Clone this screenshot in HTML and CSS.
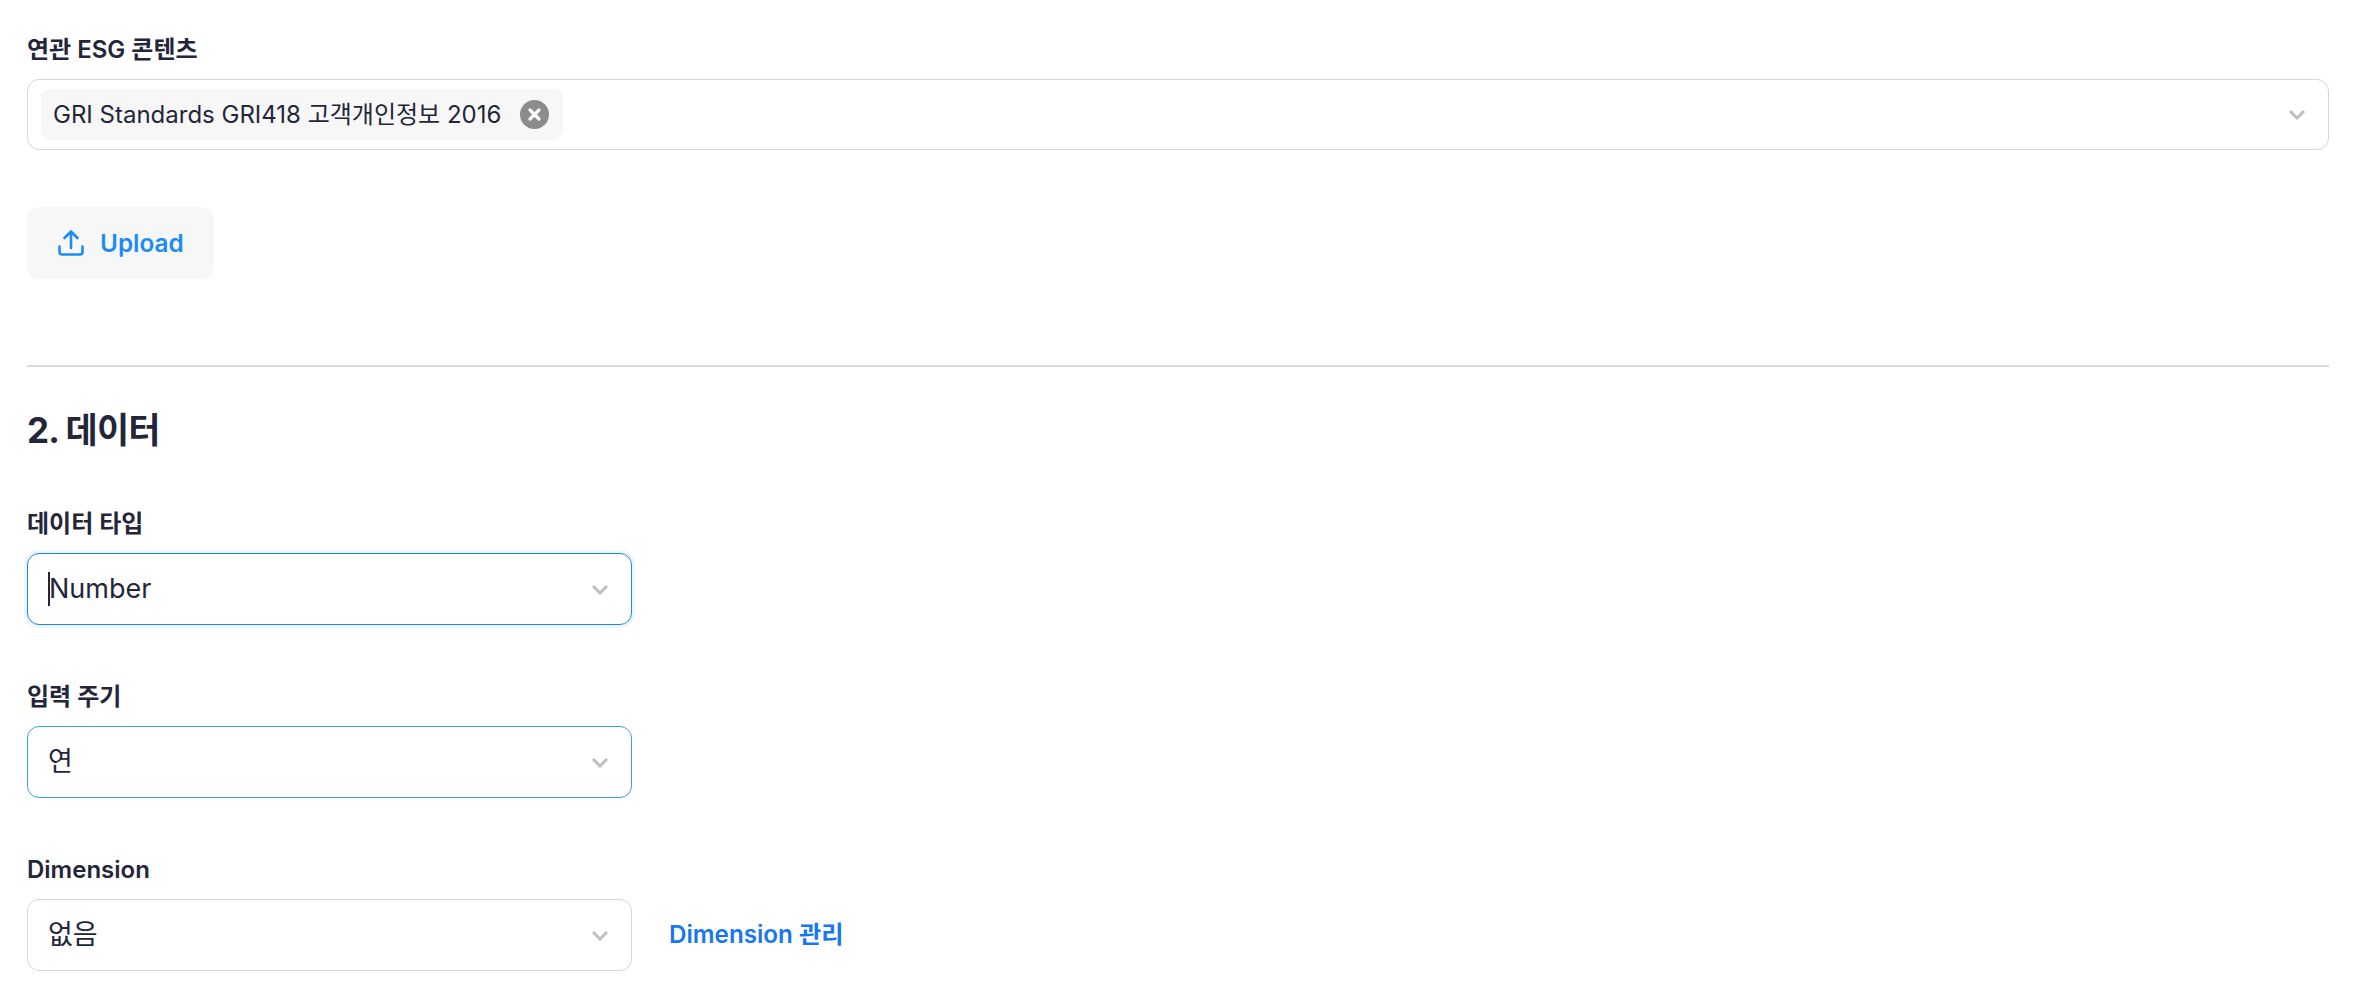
FILE: index.html
```html
<!DOCTYPE html>
<html lang="ko">
<head>
<meta charset="utf-8">
<title>ESG</title>
<link rel="stylesheet" href="styles.css">
</head>
<body>
<main class="page">
  <section class="field">
    <div class="label">연관 ESG 콘텐츠</div>
    <div class="control control-wide">
      <span class="chip">
        <span class="chip-text">GRI Standards GRI418 고객개인정보 2016</span>
        <svg class="chip-close" viewBox="0 0 29 29" aria-hidden="true"><circle cx="14.5" cy="14.5" r="14.5" fill="#8c8c8c"/><path d="M10 10l9 9M19 10l-9 9" stroke="#fff" stroke-width="3.2" stroke-linecap="round"/></svg>
      </span>
      <svg class="chevron" viewBox="0 0 18 11" aria-hidden="true"><path d="M2 2l7 7 7-7" fill="none" stroke="#bfbfbf" stroke-width="3"/></svg>
    </div>
  </section>
  <button class="upload" type="button">
    <svg class="upload-icon" viewBox="0 0 26 26" aria-hidden="true"><path d="M13 18V2M6.500 8L13 1.500 19.500 8M1.500 16.500V22a2.500 2.500 0 0 0 2.500 2.500H22a2.500 2.500 0 0 0 2.500-2.500V16.500" fill="none" stroke="#1c8cf5" stroke-width="2.600" stroke-linecap="round" stroke-linejoin="round"/></svg>
    <span>Upload</span>
  </button>
  <hr class="divider">
  <h2 class="heading">2. 데이터</h2>
  <section class="field field-type">
    <div class="label">데이터 타입</div>
    <div class="control control-select control-focus">
      <span class="caret"></span><span class="value value-caret">Number</span>
      <svg class="chevron" viewBox="0 0 18 11" aria-hidden="true"><path d="M2 2l7 7 7-7" fill="none" stroke="#bfbfbf" stroke-width="3"/></svg>
    </div>
  </section>
  <section class="field field-cycle">
    <div class="label">입력 주기</div>
    <div class="control control-select control-active">
      <span class="value">연</span>
      <svg class="chevron" viewBox="0 0 18 11" aria-hidden="true"><path d="M2 2l7 7 7-7" fill="none" stroke="#bfbfbf" stroke-width="3"/></svg>
    </div>
  </section>
  <section class="field field-dim">
    <div class="label">Dimension</div>
    <div class="row">
      <div class="control control-select">
        <span class="value">없음</span>
        <svg class="chevron" viewBox="0 0 18 11" aria-hidden="true"><path d="M2 2l7 7 7-7" fill="none" stroke="#bfbfbf" stroke-width="3"/></svg>
      </div>
      <a class="link" href="#">Dimension 관리</a>
    </div>
  </section>
</main>
</body>
</html>
```
FILE: styles.css
```css
* { box-sizing: border-box; }
html, body { margin: 0; padding: 0; background: #fff; }
body {
  font-family: Inter, "Noto Sans CJK KR", sans-serif;
  color: #23263a;
  height: 996px;
  overflow: hidden;
}
.page { padding: 33px 41px 0 27px; }
.label {
  font-size: 24px;
  line-height: 34px;
  font-weight: 600;
  margin-bottom: 12px;
}
.control {
  display: flex;
  align-items: center;
  height: 72px;
  border: 1.5px solid #d6d6d6;
  border-radius: 12px;
  background: #fff;
  position: relative;
}
.control-wide { height: 71px; padding: 0 22px 0 13px; justify-content: space-between; }
.control-select { width: 605px; padding: 0 22px 0 20px; }
.control-focus { border-color: #1f86ee; box-shadow: 0 0 0 3px #edf6fe; }
.control-active { border-color: #3f9bf2; }
.chip {
  display: flex;
  align-items: center;
  height: 51px;
  width: 522px;
  padding: 0 14px 0 12px;
  justify-content: space-between;
  background: #f7f7f8;
  border-radius: 9px;
}
.chip-text { font-size: 24px; line-height: 32px; white-space: nowrap; }
.chip-close { width: 29px; height: 29px; flex: none; }
.chevron { width: 18px; height: 11px; margin-left: auto; flex: none; }
.upload {
  display: flex;
  align-items: center;
  gap: 16px;
  width: 187px;
  height: 72px;
  margin: 57px 0 0;
  padding: 0 0 1px 31px;
  border: 0;
  border-radius: 12px;
  background: #f7f7f8;
  color: #1c8cf5;
  font: 600 24.3px/32px Inter, "Noto Sans CJK KR", sans-serif;
}
.upload-icon { width: 26px; height: 26px; flex: none; }
.divider { height: 2px; margin: 86px 0 0; border: 0; background: #d9dadf; }
.heading { margin: 41px 0 0; font-size: 35px; line-height: 44px; font-weight: 700; letter-spacing: -0.8px; }
.field-type { margin-top: 55px; }
.field-cycle { margin-top: 55px; }
.field-dim { margin-top: 55px; }
.value { font-size: 27px; line-height: 36px; }
.caret { width: 2px; height: 34px; background: #23263a; flex: none; }
.value-caret { margin-left: -1px; }
.row { display: flex; align-items: center; gap: 37px; }
.link {
  color: #1677f0;
  font-size: 24.2px;
  line-height: 32px;
  font-weight: 600;
  text-decoration: none;
}
```
